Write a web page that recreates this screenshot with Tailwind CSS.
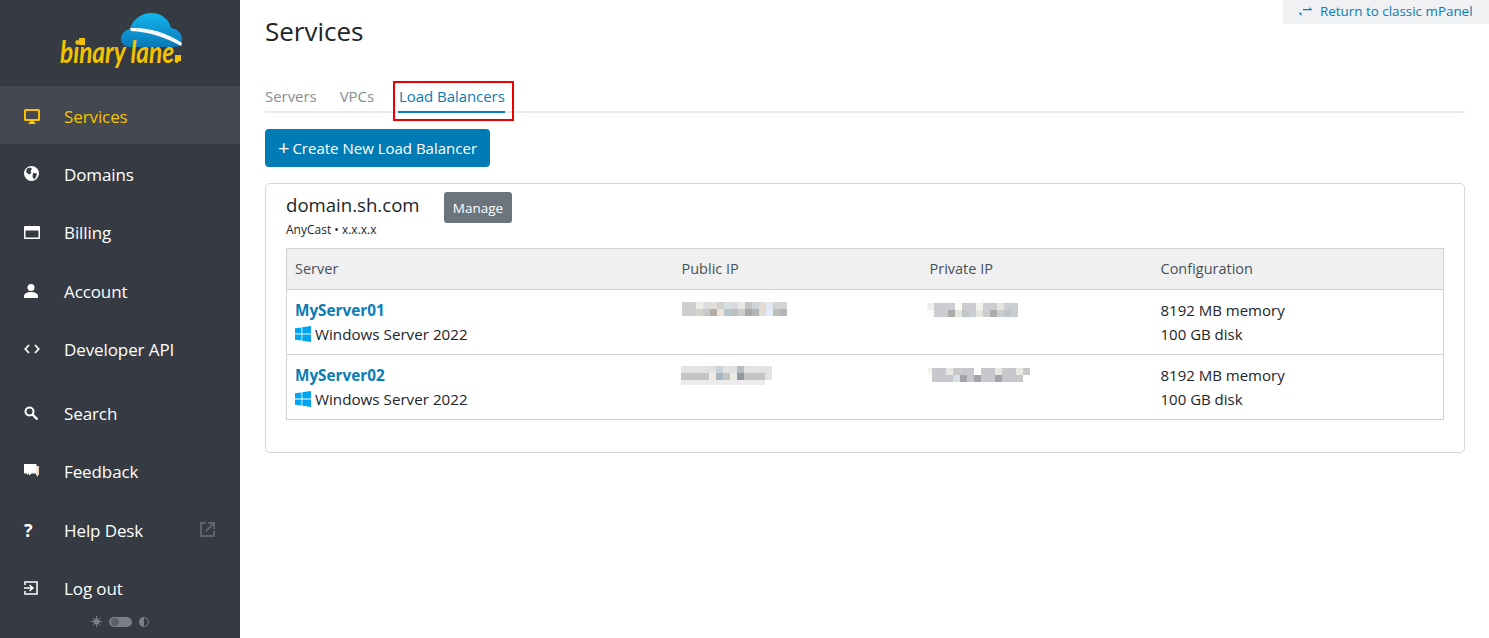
<!DOCTYPE html>
<html lang="en">
<head>
<meta charset="utf-8">
<title>Services</title>
<script src="https://cdn.jsdelivr.net/npm/@tailwindcss/browser@4"></script>
</head>
<body class="font-['Open_Sans','Noto_Sans',sans-serif] bg-white text-[#212529] h-[638px] overflow-hidden">
<div class="flex h-[638px]">
  <aside class="w-[240px] shrink-0 bg-[#363a42] text-white flex flex-col relative">
    <div class="h-[86px] relative shrink-0">
      <svg width="240" height="86" viewBox="0 0 240 86" class="absolute left-0 top-0">
        <defs><linearGradient id="c" x1="0" y1="0" x2="0" y2="1"><stop offset="0" stop-color="#12b6ee"/><stop offset="1" stop-color="#0a78b8"/></linearGradient></defs>
        <path fill="url(#c)" d="M130 47c-6 0-9-4-9-8 0-5 4-9 9-10 2-9 11-16 21-16 10 0 18 6 20 15 6 1 11 5 11 11 0 3-1 5-2 7l-6 1z"/>
        <path fill="#fff" d="M130 28c18-1 36 4 52 15l-1 3c-16-9-32-14-50-15z"/>
        <path fill="none" stroke="#c9cdd0" stroke-width=".7" stroke-dasharray="3 3" d="M136 29.500c16 0 30 5 44 14"/>
        <text x="60" y="63" font-family="Lato" font-style="italic" font-weight="700" font-size="30" fill="#f3c300" textLength="120" lengthAdjust="spacingAndGlyphs">binary lane.</text>
        <rect x="79" y="38" width="6" height="7" fill="#f3c300"/>
        <rect x="175" y="55" width="6" height="6" fill="#f3c300"/>
      </svg>
    </div>
    <nav class="flex flex-col text-[17px] tracking-[-0.1px]">
      <a class="h-[58px] flex items-center pt-[3px] bg-[#454850] text-[#f3c300]">
        <span class="w-[64px] pl-[24px] shrink-0"><svg width="16" height="16" viewBox="0 0 16 16" class="block -mt-[2px]"><path fill="#f3c300" d="M1.500 1h13A1.500 1.500 0 0 1 16 2.500v9a1.500 1.500 0 0 1-1.500 1.500H10v1.500h1.500V16h-7v-1.500H6V13H1.500A1.500 1.500 0 0 1 0 11.500v-9A1.500 1.500 0 0 1 1.500 1zm.5 2v8h12V3z"/></svg></span>Services</a>
      <a class="h-[58px] flex items-center pt-[3px]">
        <span class="w-[64px] pl-[24px] shrink-0"><svg width="15" height="15" viewBox="0 0 15 15" class="block -mt-[2px]"><circle cx="7.500" cy="7.500" r="7.500" fill="#fff"/><path fill="#363a42" d="M3 2.500 6.500 1.500 8 3 6.500 5 7.500 7 5 8.500 2 6zM9 7l4 .5-1 3.500-2 2.500-1.500-3z"/></svg></span>Domains</a>
      <a class="h-[59px] flex items-center pt-[3px]">
        <span class="w-[64px] pl-[24px] shrink-0"><svg width="16" height="13" viewBox="0 0 16 13" class="block -mt-[2px]"><path fill="#fff" fill-rule="evenodd" d="M1 0h14a1 1 0 0 1 1 1v11a1 1 0 0 1-1 1H1a1 1 0 0 1-1-1V1a1 1 0 0 1 1-1zm.5 4.500v7h13v-7z"/></svg></span>Billing</a>
      <a class="h-[58px] flex items-center pt-[3px]">
        <span class="w-[64px] pl-[24px] shrink-0"><svg width="14" height="14" viewBox="0 0 14 14" class="block -mt-[2px]"><circle cx="7" cy="3.500" r="3.500" fill="#fff"/><path fill="#fff" d="M0 14v-2c0-2.500 3.500-4 7-4s7 1.500 7 4v2z"/></svg></span>Account</a>
      <a class="h-[58px] flex items-center pt-[3px]">
        <span class="w-[64px] pl-[24px] shrink-0"><svg width="16" height="10" viewBox="0 0 16 10" class="block -mt-[2px]"><path fill="none" stroke="#fff" stroke-width="1.800" d="M5 1 1.300 5 5 9M11 1l3.700 4L11 9"/></svg></span>Developer API</a>
      <a class="h-[58px] mt-[6px] flex items-center pt-[3px]">
        <span class="w-[64px] pl-[24px] shrink-0"><svg width="14" height="14" viewBox="0 0 14 14" class="block -mt-[2px]"><circle cx="5.500" cy="5.500" r="4" fill="none" stroke="#fff" stroke-width="2"/><path stroke="#fff" stroke-width="2.400" d="m8.500 8.500 5 5"/></svg></span>Search</a>
      <a class="h-[59px] flex items-center pt-[3px]">
        <span class="w-[64px] pl-[24px] shrink-0"><svg width="15" height="14" viewBox="0 0 15 14" class="block -mt-[3px]"><path fill="#ecd9c4" d="M12 2h3v9h-1v2l-2-2z"/><path fill="#fff" d="M0 0h12.500v9.500H7.500L5.500 11.500 4.500 9.500 3 11V9.500H0z"/></svg></span>Feedback</a>
      <a class="h-[58px] flex items-center relative pt-[3px]">
        <span class="w-[64px] pl-[24px] shrink-0"><span class="font-bold text-[18px] leading-none">?</span></span>Help Desk
        <svg width="15" height="15" viewBox="0 0 15 15" class="absolute left-[200px] top-[22px]"><path fill="none" stroke="#5f646c" stroke-width="2" d="M6 1H1v13h13V9M8 1h6v6M14 1 6 9"/></svg></a>
      <a class="h-[59px] flex items-center pt-[3px]">
        <span class="w-[64px] pl-[24px] shrink-0"><svg width="14" height="14" viewBox="0 0 14 14" class="block -mt-[2px]"><path fill="none" stroke="#fff" stroke-width="1.500" d="M1 4V1h12v12H1v-3M0 7h8M5.500 4 9 7l-3.500 3"/></svg></span>Log out</a>
    </nav>
    <div class="absolute left-[91px] top-[616px] flex items-center gap-[7px]">
      <svg width="11" height="11" viewBox="0 0 11 11"><circle cx="5.500" cy="5.500" r="3" fill="#7a7f85"/><path stroke="#7a7f85" d="M5.500 0v11M0 5.500h11M1.600 1.600l7.800 7.800M9.400 1.600l-7.800 7.800"/></svg>
      <span class="w-[23px] h-[10px] rounded-full bg-[#7a7f85] flex items-center pl-[2px]"><span class="w-[8px] h-[8px] rounded-full bg-[#5c6168]"></span></span>
      <svg width="10" height="10" viewBox="0 0 10 10"><circle cx="5" cy="5" r="4.500" fill="none" stroke="#7a7f85"/><path fill="#7a7f85" d="M5 0a5 5 0 0 0 0 10z"/></svg>
    </div>
  </aside>

  <main class="flex-1 relative px-[25px] pr-[24px]">
    <a class="absolute right-0 top-0 w-[206px] h-[24px] pb-[2px] bg-[#eff1f3] text-[#0a7cb5] text-[13.4px] flex items-center pl-[16px] gap-[8px]">
      <svg width="13" height="9" viewBox="0 0 13 9" class="shrink-0"><path fill="#0a7cb5" d="M4 2h6.500V0L13 2.700v.6H4zM9 5.700H2.500V9L0 6.300v-.6z"/></svg>Return to classic mPanel</a>
    <h1 class="text-[26px] leading-[32px] pt-[15px] h-[47px] font-normal">Services</h1>
    <div class="mt-[35px] h-[31px] border-b-2 border-[#e9ecef] flex text-[15px] tracking-[-0.05px] text-[#868e96] relative">
      <a class="mr-[23px] leading-[28px]">Servers</a>
      <a class="mr-[24px] leading-[28px]">VPCs</a>
      <a class="h-[31px] pl-[1px] leading-[28px] text-[#0a7cb5] border-b-2 border-[#0a7cb5]">Load Balancers</a>
      <div class="absolute left-[128px] top-[-1px] w-[121px] h-[40px] border-2 border-[#ee0000]"></div>
    </div>
    <button class="mt-[16px] flex items-center justify-center gap-[3px] w-[225px] h-[38px] rounded-[4px] bg-[#007bb5] text-white text-[15px]"><span class="text-[20px] leading-none">+</span>Create New Load Balancer</button>
    <section class="mt-[16px] h-[270px] border border-[#d5d7da] rounded-[5px] px-[20px] pt-[8px]">
      <div class="flex items-start">
        <div class="w-[158px]">
          <h2 class="text-[18.6px] leading-[26px]">domain.sh.com</h2>
          <p class="text-[12px] leading-[16px] mt-[4px]">AnyCast • x.x.x.x</p>
        </div>
        <button class="w-[68px] h-[31px] pt-[1px] rounded-[3px] bg-[#6c757d] text-white text-[13.5px]">Manage</button>
      </div>
      <table class="mt-[10px] w-[1158px] border border-[#ced1d8] border-collapse table-fixed text-[15px]">
        <colgroup><col class="w-[387px]"><col class="w-[248px]"><col class="w-[231px]"><col></colgroup>
        <thead class="bg-[#f0f0f0] text-[#495057] text-[14.5px]">
          <tr class="h-[41px] border-b border-[#ced1d8]">
            <th class="font-normal text-left pl-[8px]">Server</th>
            <th class="font-normal text-left pl-[8px]">Public IP</th>
            <th class="font-normal text-left pl-[8px]">Private IP</th>
            <th class="font-normal text-left pl-[8px]">Configuration</th>
          </tr>
        </thead>
        <tbody class="leading-[24px]">
          <tr class="h-[65px] border-b border-[#ced1d8]">
            <td class="pl-[8px] align-middle">
              <div class="font-bold text-[#0a7cb5] text-[15.3px]">MyServer01</div>
              <div class="flex items-center gap-[4px] text-[15.2px]"><svg width="16" height="16" viewBox="0 0 16 16"><path fill="#00a4ef" d="M0 2.300 6.500 1.400v6.200H0zM7.300 1.300 16 0v7.600H7.300zM0 8.400h6.500v6.200L0 13.700zM7.300 8.400H16V16l-8.700-1.300z"/></svg>Windows Server 2022</div>
            </td>
            <td class="pl-[8px] align-top pt-[12px]">
              <svg width="105" height="14" viewBox="0 0 15 2" shape-rendering="crispEdges" class="block"><path fill="#cfcfcf" d="M0 0h2v1H0z"/><path fill="#ececea" d="M2 0h1v1H2z"/><path fill="#dcdde0" d="M3 0h1v1H3z"/><path fill="#e2ded8" d="M4 0h1v1H4z"/><path fill="#d2d4cc" d="M5 0h1v1H5z"/><path fill="#d8dfe4" d="M6 0h1v1H6z"/><path fill="#d9dce0" d="M7 0h1v1H7z"/><path fill="#e8e8e4" d="M8 0h1v1H8z"/><path fill="#c4c6c4" d="M9 0h1v1H9z"/><path fill="#d0d4d8" d="M10 0h1v1h-1z"/><path fill="#e4dcd4" d="M11 0h1v1h-1z"/><path fill="#e2e8ee" d="M12 0h1v1h-1z"/><path fill="#d0d4d4" d="M13 0h2v1h-2z"/><path fill="#cdcdcd" d="M0 1h2v1H0z"/><path fill="#d4d0ca" d="M2 1h1v1H2z"/><path fill="#c6c8cc" d="M3 1h1v1H3z"/><path fill="#b0aca6" d="M4 1h1v1H4z"/><path fill="#ebe4dc" d="M5 1h1v1H5z"/><path fill="#b8c6ce" d="M6 1h1v1H6z"/><path fill="#bcc0bc" d="M7 1h1v1H7z"/><path fill="#cdcdc8" d="M8 1h1v1H8z"/><path fill="#a8a8aa" d="M9 1h1v1H9z"/><path fill="#b2b4b4" d="M10 1h1v1h-1z"/><path fill="#e4dcd2" d="M11 1h1v1h-1z"/><path fill="#e2ecfa" d="M12 1h1v1h-1z"/><path fill="#c0bdb4" d="M13 1h1v1h-1z"/><path fill="#b2b6ba" d="M14 1h1v1h-1z"/></svg>
            </td>
            <td class="pl-[5px] align-top pt-[13px]">
              <svg width="91" height="14" viewBox="0 0 13 2" shape-rendering="crispEdges" class="block"><rect width="13" height="2" fill="#cccdd0"/><path fill="#f0f0ea" d="M0 0h1v1H0z"/><path fill="#fbfbf7" d="M0 1h1v1H0zM4 0h1v1H4z"/><path fill="#f4f2ee" d="M7 0h1v1H7z"/><path fill="#aeaaa8" d="M3 1h1v1H3zM9 1h1v1H9z"/><path fill="#e6e4de" d="M10 0h1v1h-1zM4 1h1v1H4zM7 1h1v1H7z"/><path fill="#bfc6ca" d="M5 1h1v1H5zM11 1h1v1h-1z"/></svg>
            </td>
            <td class="pl-[8px] align-middle">8192 MB memory<br>100 GB disk</td>
          </tr>
          <tr class="h-[65px]">
            <td class="pl-[8px] align-middle">
              <div class="font-bold text-[#0a7cb5] text-[15.3px]">MyServer02</div>
              <div class="flex items-center gap-[4px] text-[15.2px]"><svg width="16" height="16" viewBox="0 0 16 16"><path fill="#00a4ef" d="M0 2.300 6.500 1.400v6.200H0zM7.300 1.300 16 0v7.600H7.300zM0 8.400h6.500v6.200L0 13.700zM7.300 8.400H16V16l-8.700-1.300z"/></svg>Windows Server 2022</div>
            </td>
            <td class="pl-[8px] align-top pt-[11px]">
              <svg width="91" height="19" viewBox="0 0 91 19" shape-rendering="crispEdges" class="block -ml-[1px]"><rect width="91" height="7" fill="#e2e2e4"/><rect y="7" width="91" height="7" fill="#c4c4c4"/><rect y="14" width="84" height="5" fill="#ececec"/><path fill="#a8b4bd" d="M35 7h7v7h-7z"/><path fill="#8f999f" d="M56 7h7v7h-7z"/><path fill="#efeae4" d="M28 7h7v7h-7zM49 7h7v7h-7z"/><path fill="#c9d0d8" d="M35 0h7v7h-7z"/><path fill="#b8bcc4" d="M56 0h7v7h-7z"/><path fill="#dde4ea" d="M84 7h7v7h-7z"/></svg>
            </td>
            <td class="pl-[6px] align-top pt-[13px]">
              <svg width="102" height="14" viewBox="0 0 102 14" shape-rendering="crispEdges" class="block"><rect x="4" width="98" height="14" fill="#c8c8cc"/><path fill="#f5f3ee" d="M0 0h4v7H0z"/><path fill="#fff" d="M46 0h7v7h-7zM95 7h7v7h-7z"/><path fill="#e6e8e4" d="M18 0h7v7h-7zM67 0h7v7h-7zM88 0h7v7h-7z"/><path fill="#a4a4a8" d="M46 7h7v7h-7zM32 7h7v7h-7zM67 7h7v7h-7z"/><path fill="#d8dde6" d="M25 7h7v7h-7z"/></svg>
            </td>
            <td class="pl-[8px] align-middle">8192 MB memory<br>100 GB disk</td>
          </tr>
        </tbody>
      </table>
    </section>
  </main>
</div>
</body>
</html>
